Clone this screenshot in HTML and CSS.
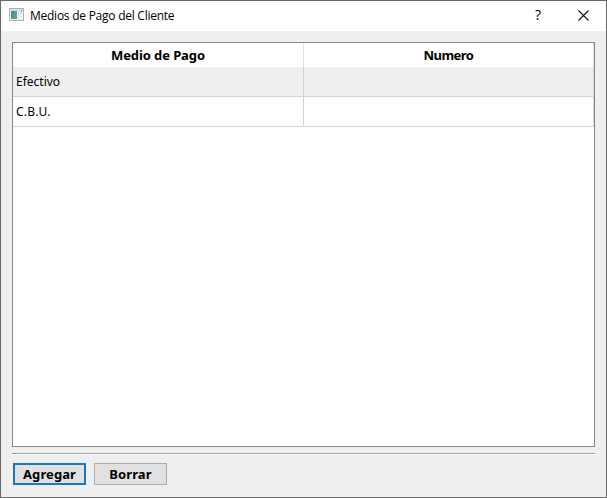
FILE: index.html
```
<!DOCTYPE html>
<html lang="es">
<head>
<meta charset="utf-8">
<title>Medios de Pago del Cliente</title>
<link rel="stylesheet" href="styles.css">
</head>
<body>
<div class="window">
  <header class="titlebar">
    <svg class="app-icon" width="16" height="14" viewBox="0 0 16 14">
      <defs><linearGradient id="pane" x1="0" y1="0" x2="1" y2="1"><stop offset="0" stop-color="#3f8f92"/><stop offset="1" stop-color="#62a58a"/></linearGradient></defs>
      <rect x=".5" y=".5" width="14" height="12" fill="#f0f5f6" stroke="#a9b3b8"/>
      <rect x="1" y="1" width="13" height="2" fill="#d3dfe5"/>
      <rect x="2" y="3" width="6" height="8" fill="url(#pane)"/>
      <path d="M9.500 3v8M11 5.500h2M11 8.500h2" stroke="#d5dfe2"/>
      <rect x="12" y="2" width="1" height="2" fill="#5b9b9b"/>
    </svg>
    <h1 class="title">Medios de Pago del Cliente</h1>
    <span class="help">?</span>
    <svg class="close" width="11" height="11" viewBox="0 0 11 11"><path d="M.5 .5l10 10M10.500 .5l-10 10" stroke="#111" stroke-width="1.100" fill="none"/></svg>
  </header>
  <main class="content">
    <div class="table-view">
      <div class="row head"><div class="cell">Medio de Pago</div><div class="cell number">Numero</div></div>
      <div class="row alt"><div class="cell">Efectivo</div><div class="cell"></div></div>
      <div class="row"><div class="cell initials">C.B.U.</div><div class="cell"></div></div>
    </div>
    <div class="separator"></div>
    <div class="actions">
      <button class="button primary">Agregar</button>
      <button class="button">Borrar</button>
    </div>
  </main>
</div>
</body>
</html>
```

FILE: styles.css
```
* { box-sizing: border-box; }
body { margin: 0; font-family: "Noto Sans", "Open Sans", sans-serif; color: #000; }
.window { width: 607px; height: 498px; border: 1px solid #69676a; background: #efefef; display: flex; flex-direction: column; }
.titlebar { height: 30px; background: #fff; display: flex; align-items: center; padding: 0 17px 0 8px; }
.app-icon { display: block; margin-top: -2px; }
.title { margin: 0 auto 0 5px; font: 400 12px/20px "Open Sans", sans-serif; letter-spacing: -.25px; }
.help { font: 400 14px/20px "Open Sans", sans-serif; margin: -2px 37px 0 0; }
.close { display: block; margin-top: -1px; }
.content { flex: 1; padding: 11px; display: flex; flex-direction: column; }
.table-view { height: 405px; border: 1px solid #828790; background: #fff; }
.row { display: grid; grid-template-columns: 291px 290px; height: 30px; width: 581px; }
.cell { border-right: 1px solid #d4d4d4; border-bottom: 1px solid #d4d4d4; font-size: 12px; line-height: 29px; padding-left: 3px; }
.initials { letter-spacing: .25px; }
.head { height: 24px; }
.head .cell { border-bottom: 0; border-right-color: #e2e2e2; font-weight: 700; font-size: 13px; line-height: 25px; text-align: center; padding: 0; letter-spacing: -.1px; }
.head .number { letter-spacing: -.55px; }
.alt .cell { background: #efefef; }
.separator { height: 2px; margin-top: 6px; border-top: 1px solid #a0a0a0; border-bottom: 1px solid #fff; }
.actions { display: flex; gap: 8px; margin: 8px 0 0 1px; }
.button { width: 73px; height: 22px; margin: 0; padding: 0; border: 1px solid #adadad; border-radius: 0; background: #e1e1e1; color: #000; font: 700 13px/20px "Noto Sans", "Open Sans", sans-serif; letter-spacing: .1px; }
.primary { border: 2px solid #1979bf; line-height: 18px; }
```
